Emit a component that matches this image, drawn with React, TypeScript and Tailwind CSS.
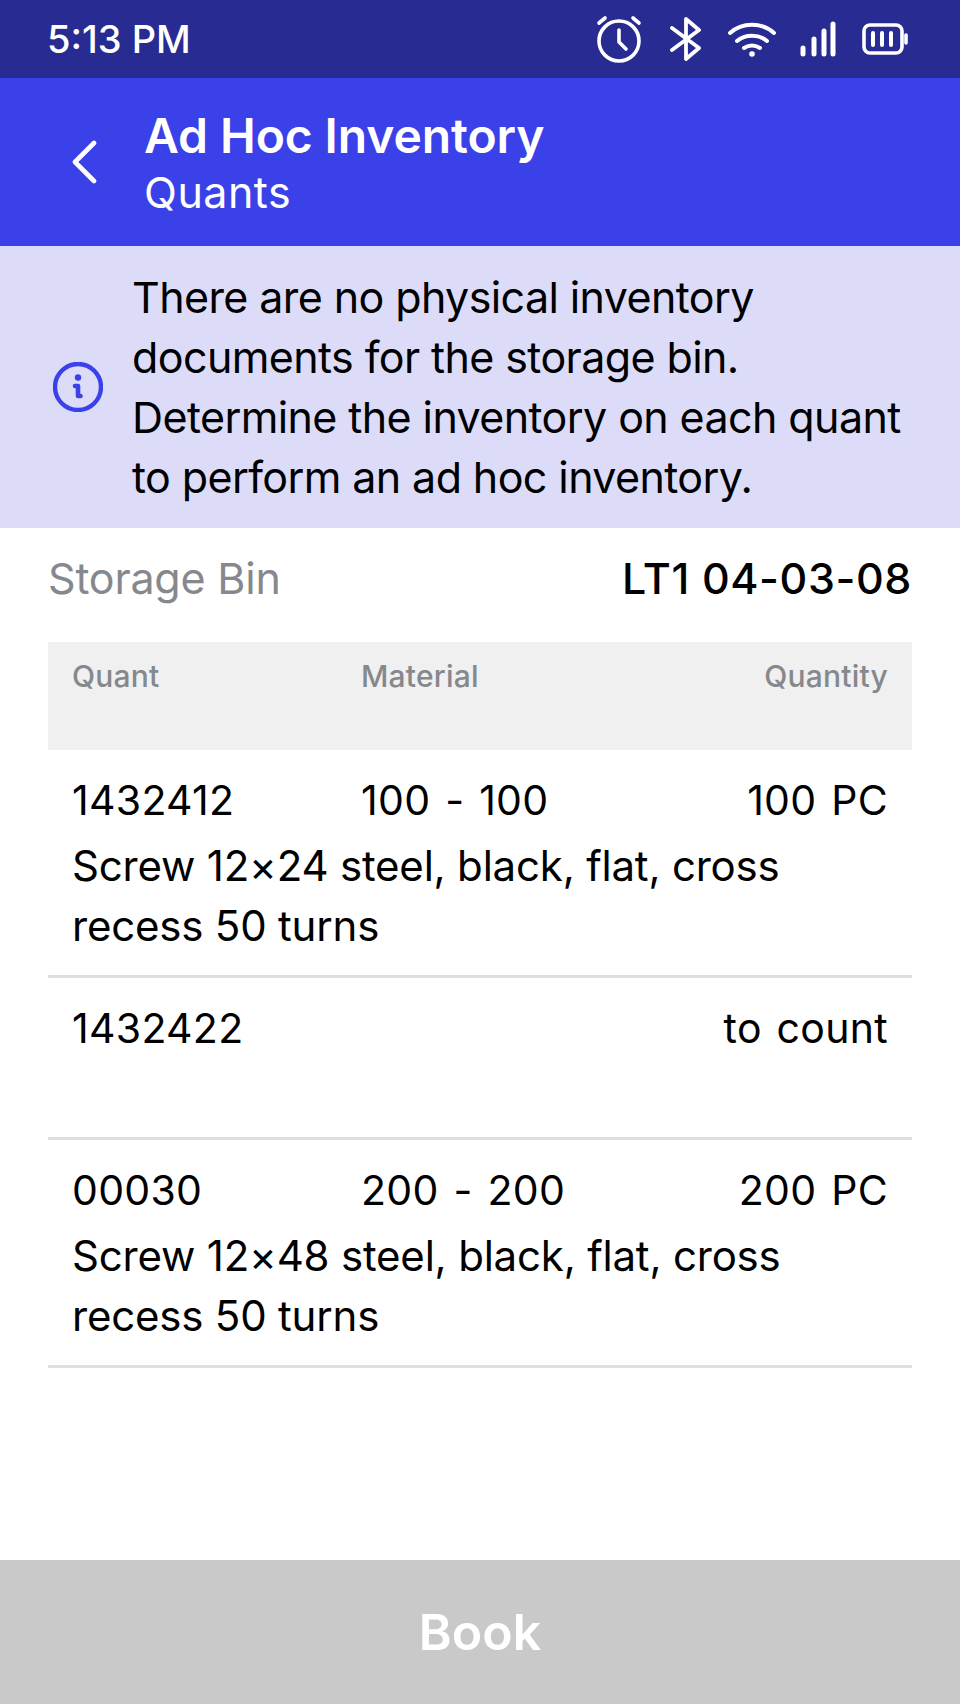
import React from "react";

const font = { fontFamily: "Inter, sans-serif" };

function StatusIcons() {
  return (
    <div className="flex items-center text-white">
      <svg width="48" height="48" viewBox="0 0 48 48" fill="none" stroke="currentColor" strokeWidth="3.6" strokeLinecap="round" strokeLinejoin="round" className="mr-[26px]">
        <circle cx="24" cy="26" r="20" />
        <path d="M24 15v12l7 7M4 8l6-5M44 8l-6-5" />
      </svg>
      <svg width="34" height="44" viewBox="0 0 34 44" fill="none" stroke="currentColor" strokeWidth="3.8" strokeLinecap="round" strokeLinejoin="round" className="mr-[25px]">
        <path d="M3 11l27 20-13 11V2l13 11L3 33" />
      </svg>
      <svg width="48" height="36" viewBox="0 0 48 36" fill="none" stroke="currentColor" strokeWidth="4" strokeLinecap="round" className="mr-[24px]">
        <path d="M2 12c12-11 32-11 44 0M9 20c8-7 22-7 30 0M16 27c5-3 11-3 16 0" />
        <circle cx="24" cy="33" r="2.8" fill="currentColor" stroke="none" />
      </svg>
      <svg width="36" height="36" viewBox="0 0 36 36" fill="none" stroke="currentColor" strokeWidth="5" strokeLinecap="round" className="mr-[26px]">
        <path d="M3 33v-6M14 33V18M24 33V10M33 33V3" />
      </svg>
      <svg width="46" height="32" viewBox="0 0 46 32" fill="none" stroke="currentColor" strokeLinecap="round" className="mr-[7px]">
        <rect x="2" y="2" width="38" height="28" rx="6" strokeWidth="3.6" />
        <path d="M44 12v8" strokeWidth="3.6" />
        <path d="M11 10v12M20 10v12M29 10v12" strokeWidth="4" />
      </svg>
    </div>
  );
}

function Row({ quant, material, qty, text, height }: { quant: string; material?: string; qty: string; text?: string; height: string }) {
  return (
    <div className={`${height} border-b-[3px] border-[#dedfe0] px-[24px] pt-[26px] text-black`}>
      <div className="flex h-[48px] items-center text-[41px] leading-[48px] tracking-[0.3px] [word-spacing:3px]">
        <div className="w-[289px]">{quant}</div>
        <div className="flex-1">{material}</div>
        <div>{qty}</div>
      </div>
      {text && <div className="mt-[12px] text-[42px] leading-[60px] tracking-[-0.2px]">{text}</div>}
    </div>
  );
}

export default function App() {
  return (
    <div className="flex h-[1704px] w-[960px] flex-col bg-white" style={font}>
      <div className="flex h-[78px] shrink-0 items-center justify-between bg-[#282b92] pl-[47px] pr-[45px]">
        <div className="text-[38px] font-medium leading-none text-white">5:13 PM</div>
        <StatusIcons />
      </div>

      <div className="flex h-[168px] shrink-0 items-center bg-[#3b41e8] pl-[70px]">
        <svg width="30" height="44" viewBox="0 0 30 44" fill="none" stroke="white" strokeWidth="4.6" strokeLinecap="round" strokeLinejoin="round">
          <path d="M24 3L5 22l19 19" />
        </svg>
        <div className="ml-[44px] text-white">
          <div className="text-[48px] font-semibold leading-[60px] tracking-[-0.1px]">Ad Hoc Inventory</div>
          <div className="text-[43px] leading-[52px] tracking-[0.5px]">Quants</div>
        </div>
      </div>

      <div className="flex h-[282px] shrink-0 items-center bg-[#dcdcf8] pl-[53px]">
        <svg width="50" height="50" viewBox="0 0 50 50" fill="none" className="shrink-0">
          <circle cx="25" cy="25" r="23" stroke="#3b41e8" strokeWidth="4.4" />
          <circle cx="25" cy="15.5" r="3.2" fill="#3b41e8" />
          <path d="M22 24h3v10h2.5" stroke="#3b41e8" strokeWidth="4.6" strokeLinecap="round" strokeLinejoin="round" />
        </svg>
        <div className="ml-[29px] text-[43px] leading-[60px] tracking-[-0.6px] text-black">
          <div>There are no physical inventory</div>
          <div>documents for the storage bin.</div>
          <div>Determine the inventory on each quant</div>
          <div>to perform an ad hoc inventory.</div>
        </div>
      </div>

      <div className="flex flex-1 flex-col px-[48px]">
        <div className="flex h-[114px] items-center justify-between pb-[13px]">
          <span className="text-[43px] tracking-[-0.2px] text-[#85888c]">Storage Bin</span>
          <span className="text-[43px] font-medium tracking-[0.6px] text-black">LT1 04-03-08</span>
        </div>

        <div className="flex h-[108px] bg-[#f0f0f0] px-[24px] pt-[16px] text-[30px] font-medium leading-[36px] tracking-[0.2px] text-[#85888c]">
          <div className="w-[289px]">Quant</div>
          <div className="flex-1">Material</div>
          <div>Quantity</div>
        </div>

        <Row height="h-[228px]" quant="1432412" material="100 - 100" qty="100 PC" text="Screw 12×24 steel, black, flat, cross recess 50 turns" />
        <Row height="h-[162px]" quant="1432422" qty="to count" />
        <Row height="h-[228px]" quant="00030" material="200 - 200" qty="200 PC" text="Screw 12×48 steel, black, flat, cross recess 50 turns" />
      </div>

      <div className="flex h-[144px] shrink-0 items-center justify-center bg-[#c9c9c9] text-[50px] font-semibold text-white">Book</div>
    </div>
  );
}
